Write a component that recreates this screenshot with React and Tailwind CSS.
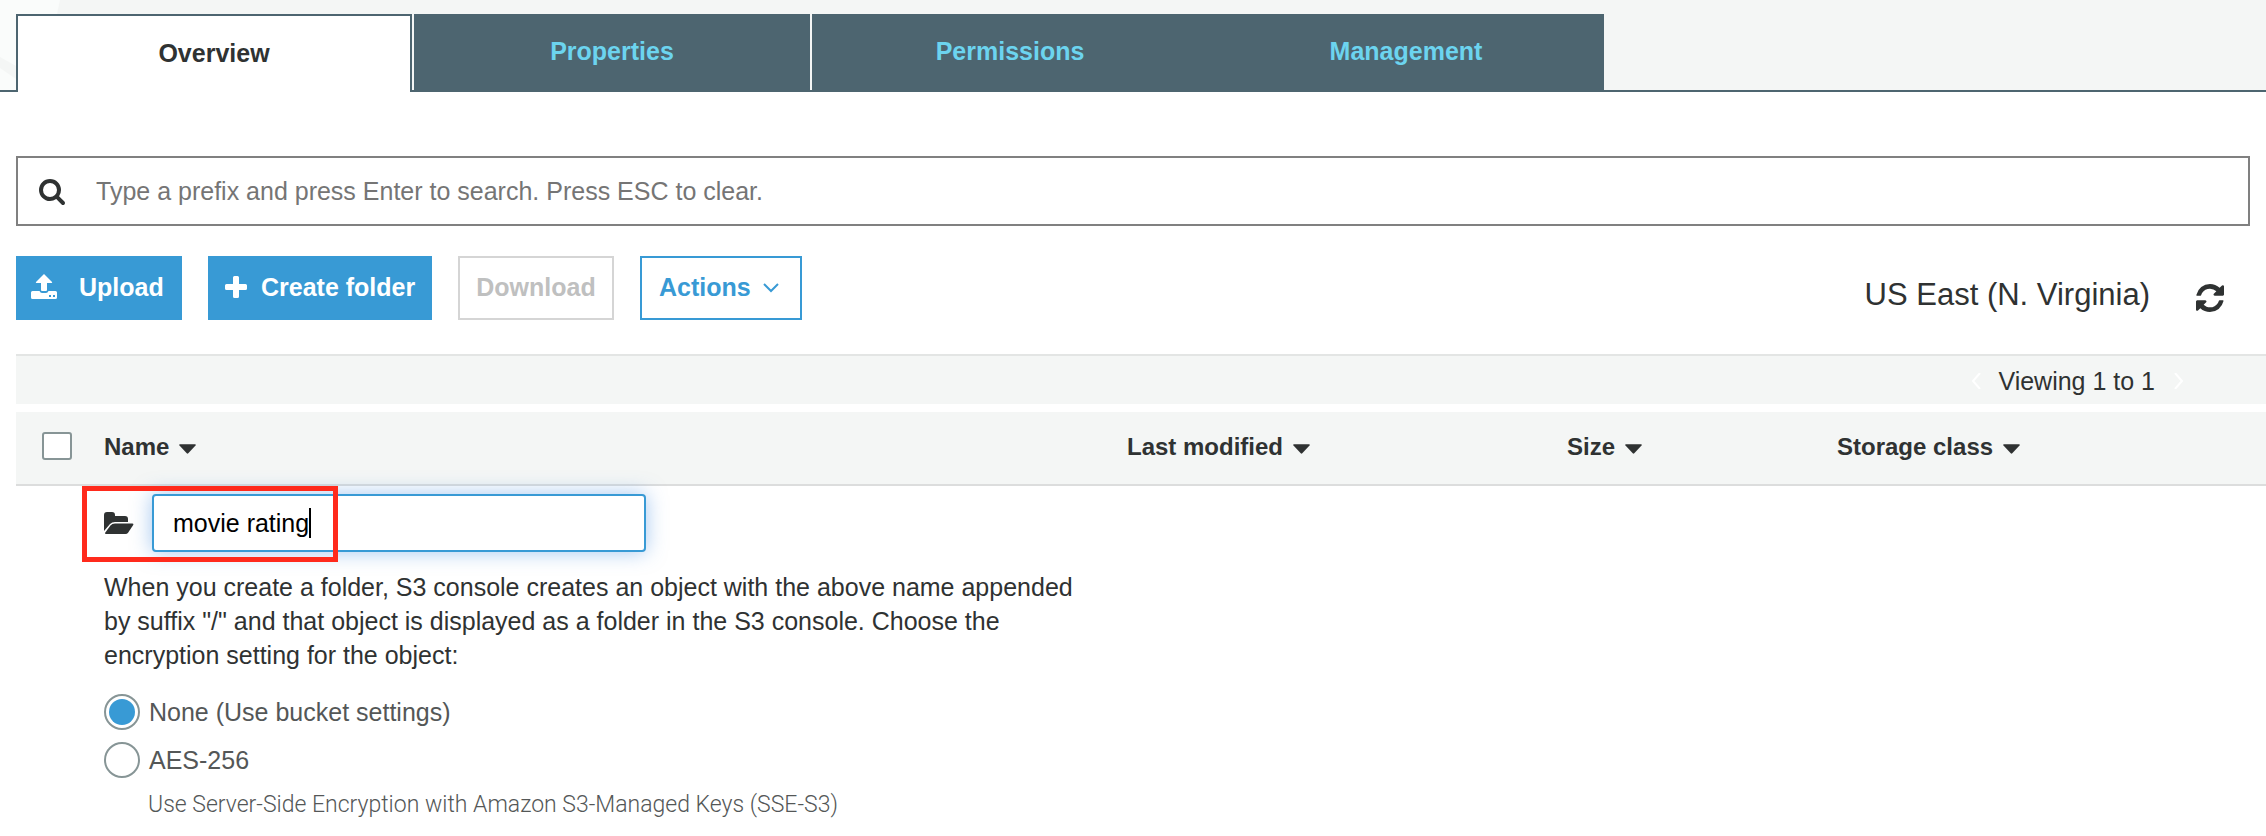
import { useState } from "react";

const tabs = ["Overview", "Properties", "Permissions", "Management"];
const columns = [
  { name: "Last modified", width: "w-[440px] pb-[2px]" },
  { name: "Size", width: "w-[270px] pb-[2px]" },
  { name: "Storage class", width: "w-[429px] pb-[2px]" },
];

function Caret() {
  return (
    <svg viewBox="0 0 18 10" className="mt-1 h-[10px] w-[17px]" fill="currentColor">
      <path d="M1 0h16q1.500 0 .5 1.200L9.800 9.500q-.8.800-1.600 0L.5 1.200Q-.5 0 1 0z" />
    </svg>
  );
}

function SearchIcon() {
  return (
    <svg viewBox="0 0 1664 1664" className="mt-[2px] size-[26px] shrink-0" fill="currentColor">
      <path d="M1152 704q0-185-131.500-316.500T704 256 387.500 387.500 256 704t131.500 316.500T704 1152t316.500-131.500T1152 704zm512 832q0 52-38 90t-90 38q-54 0-90-38l-343-342q-179 124-399 124-143 0-273.500-55.500t-225-150-150-225T0 704t55.500-273.500 150-225 225-150T704 0t273.500 55.500 225 150 150 225T1408 704q0 220-124 399l343 343q37 37 37 90z" />
    </svg>
  );
}

function UploadIcon() {
  return (
    <svg viewBox="0 0 26 26" className="size-[26px]" fill="currentColor">
      <path d="M13 0l8 8q.6 1-.5 1H16v7q0 1-1 1h-4q-1 0-1-1V9H5.500q-1.100 0-.5-1z" />
      <path
        fillRule="evenodd"
        d="M1.500 17H8.500q.8 2 2.500 2h4q1.700 0 2.500-2h7q1.500 0 1.500 1.500v5q0 1.500-1.500 1.500h-23Q0 25 0 23.500v-5Q0 17 1.500 17zM18 21v2h2v-2zm4 0v2h2v-2z"
      />
    </svg>
  );
}

function PlusIcon() {
  return (
    <svg viewBox="0 0 22 22" className="size-[22px]" fill="currentColor">
      <path d="M9.500 0h3q1.500 0 1.500 1.500V8h6.500Q22 8 22 9.500v3q0 1.500-1.500 1.500H14v6.500q0 1.500-1.500 1.500h-3Q8 22 8 20.500V14H1.500Q0 14 0 12.500v-3Q0 8 1.500 8H8V1.500Q8 0 9.500 0z" />
    </svg>
  );
}

function Chevron({ d }) {
  return (
    <svg viewBox="0 0 16 16" className="size-4" fill="none" stroke="currentColor" strokeWidth="2">
      <path d={d} />
    </svg>
  );
}

function RefreshIcon() {
  return (
    <svg viewBox="0 0 1536 1536" className="size-7" fill="currentColor">
      <path d="M1511 928q0 5-1 7-64 268-268 434.500T764 1536q-146 0-282.500-55T238 1324l-129 129q-19 19-45 19t-45-19-19-45V960q0-26 19-45t45-19h448q26 0 45 19t19 45-19 45l-137 137q71 66 161 102t187 36q134 0 250-65t186-179q11-17 53-117 8-23 30-23h192q13 0 22.500 9.500t9.500 22.500zm25-800v448q0 26-19 45t-45 19h-448q-26 0-45-19t-19-45 19-45l138-138Q969 256 768 256q-134 0-250 65T332 500q-11 17-53 117-8 23-30 23H50q-13 0-22.500-9.500T18 608v-7q65-268 270-434.500T768 0q146 0 284 55.500T1297 212l130-129q19-19 45-19t45 19 19 45z" />
    </svg>
  );
}

function FolderIcon() {
  return (
    <svg viewBox="0 0 30 24" className="h-6 w-[30px] shrink-0" fill="currentColor">
      <path d="M0 20V4q0-3 3-3h5q3 0 3 3v1h10q3 0 3 3v3H11q-3 0-5 2z" />
      <path d="M11 12.500h17.500q1.500 0 .7 1.500l-5 7.500Q23.200 23 21.500 23H2Q.5 23 1.300 21.500l5.200-7Q8 12.500 11 12.500z" />
    </svg>
  );
}

export default function App() {
  const [tab, setTab] = useState("Overview");
  const [folder, setFolder] = useState("movie rating");
  const [encryption, setEncryption] = useState("none");

  return (
    <div className="bg-white pb-6 font-['Liberation_Sans',Arial,sans-serif] text-[25px] leading-[34px] text-[#2f3232]">
      <nav className="relative flex h-[92px] border-b-2 border-[#4d6570] bg-[#f4f6f5] pt-[14px] pl-4">
        <svg viewBox="0 0 60 90" className="absolute top-0 left-0 h-[90px] w-[60px]" fill="#fafcfb" aria-hidden="true">
          <path d="M0 0h60l-3 14v65H16L0 68zM0 57v11l16 11V66z" fillRule="evenodd" />
          <path d="M0 68l16 11v11H0z" />
        </svg>
        {tabs.map((name) => (
          <button
            key={name}
            onClick={() => setTab(name)}
            className={
              name === tab
                ? "relative -mb-[2px] mr-[2px] h-[78px] w-[396px] border-2 border-b-0 border-[#4d6570] bg-white pb-[2px] font-bold"
                : name === "Properties"
                  ? "h-[76px] w-[398px] border-r-2 border-[#f4f6f5] bg-[#4d6570] pb-[2px] font-bold text-[#6cd4ef]"
                  : "h-[76px] w-[396px] bg-[#4d6570] pb-[2px] font-bold text-[#6cd4ef]"
            }
          >
            {name}
          </button>
        ))}
      </nav>

      <label className="mt-16 mr-4 ml-4 flex h-[70px] items-center border-2 border-[#808080] pl-[21px]">
        <SearchIcon />
        <input
          aria-label="Search"
          placeholder="Type a prefix and press Enter to search. Press ESC to clear."
          className="ml-[31px] flex-1 outline-none placeholder:text-[#757575]"
        />
      </label>

      <div className="mt-[30px] flex pr-[42px] pl-4">
        <div className="flex h-16 gap-[26px] font-bold">
          <button className="flex w-[166px] items-center gap-[22px] bg-[#389ad5] pb-[2px] pl-[15px] text-white">
            <UploadIcon />
            Upload
          </button>
          <button className="flex w-[224px] items-center gap-[14px] bg-[#389ad5] pb-[2px] pl-[17px] text-white">
            <PlusIcon />
            Create folder
          </button>
          <button disabled className="w-[156px] border-2 border-[#d5d5d5] pb-[2px] text-[#bfc0c0]">
            Download
          </button>
          <button className="flex w-[162px] items-center gap-3 border-2 border-[#389ad5] pb-[2px] pl-[17px] text-[#389ad5]">
            Actions
            <Chevron d="M1 5l7 7 7-7" />
          </button>
        </div>
        <div className="mt-[19px] ml-auto flex items-start gap-[46px]">
          <span className="text-[31px] leading-[40px]">US East (N. Virginia)</span>
          <button aria-label="Refresh" className="mt-[9px]">
            <RefreshIcon />
          </button>
        </div>
      </div>

      <div className="mt-[34px] ml-4">
        <div className="flex h-[50px] items-center justify-end gap-4 border-t-2 border-[#e3e5e4] bg-[#f4f6f5] pt-[2px] pr-[79px]">
          <button aria-label="Previous page" className="text-white">
            <Chevron d="M14 0L7 8l7 8" />
          </button>
          <span>Viewing 1 to 1</span>
          <button aria-label="Next page" className="text-white">
            <Chevron d="M4 0l7 8-7 8" />
          </button>
        </div>

        <table className="mt-2 w-full table-fixed text-left">
          <thead>
            <tr className="h-[73px] border-b-2 border-[#dcdddd] bg-[#f4f6f5]">
              <th className="w-[88px] pb-1 pl-[26px]">
                <input
                  type="checkbox"
                  aria-label="Select all"
                  className="block h-7 w-[30px] appearance-none rounded-[3px] border-2 border-[#879596] bg-white"
                />
              </th>
              <th className="pb-[2px]">
                <button className="flex items-center gap-[10px] text-2xl font-bold">
                  Name <Caret />
                </button>
              </th>
              {columns.map((c) => (
                <th key={c.name} className={c.width}>
                  <button className="flex items-center gap-[10px] text-2xl font-bold">
                    {c.name} <Caret />
                  </button>
                </th>
              ))}
            </tr>
          </thead>
          <tbody>
            <tr>
              <td />
              <td className="pt-2" colSpan={4}>
                <div className="relative flex items-center gap-[18px]">
                  <FolderIcon />
                  <label className="flex h-[58px] w-[494px] items-center rounded-[4px] border-2 border-[#389ad5] bg-white pl-[19px] text-black shadow-[0_0_20px_rgba(74,144,226,0.5)]">
                    <input
                      aria-label="Folder name"
                      value={folder}
                      onChange={(e) => setFolder(e.target.value)}
                      className="field-sizing-content outline-none"
                    />
                    <span className="h-[30px] w-[2px] bg-black" />
                  </label>
                  <div className="pointer-events-none absolute -top-2 -left-[22px] h-[76px] w-[256px] border-5 border-[#ff2a1c]" />
                </div>
                <p className="mt-[18px] w-[1000px]">
                  When you create a folder, S3 console creates an object with the above name appended by suffix "/" and
                  that object is displayed as a folder in the S3 console. Choose the encryption setting for the object:
                </p>
                <div className="mt-[22px] flex flex-col gap-3 text-[#545757]">
                  {[
                    ["none", "None (Use bucket settings)"],
                    ["aes", "AES-256"],
                  ].map(([id, label]) => (
                    <label key={id} className="flex h-9 items-center gap-[9px]">
                      <input
                        type="radio"
                        name="encryption"
                        checked={encryption === id}
                        onChange={() => setEncryption(id)}
                        className="size-9 appearance-none rounded-full border-2 border-[#879596] bg-white bg-clip-content p-[3px] checked:bg-[#389ad5]"
                      />
                      {label}
                    </label>
                  ))}
                </div>
                <p className="mt-[10px] ml-11 font-['Roboto',sans-serif] text-[23px] font-light text-[#545757]">
                  Use Server-Side Encryption with Amazon S3-Managed Keys (SSE-S3)
                </p>
              </td>
            </tr>
          </tbody>
        </table>
      </div>
    </div>
  );
}
